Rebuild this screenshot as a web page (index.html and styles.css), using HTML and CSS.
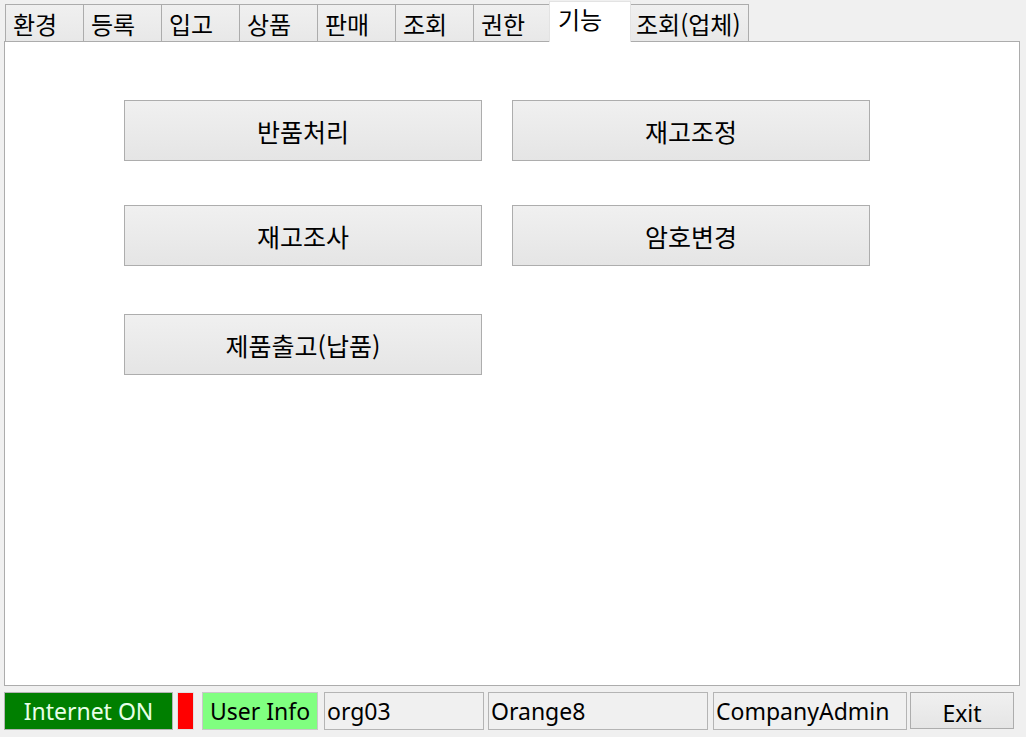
FILE: index.html
```html
<!DOCTYPE html>
<html lang="ko">
<head>
    <meta charset="UTF-8">
    <title>기능</title>
    <link rel="stylesheet" href="styles.css">
</head>
<body>

    <div class="tabs">
        <div class="tab">환경</div>
        <div class="tab">등록</div>
        <div class="tab">입고</div>
        <div class="tab">상품</div>
        <div class="tab">판매</div>
        <div class="tab">조회</div>
        <div class="tab">권한</div>
        <div class="tab active">기능</div>
        <div class="tab wide">조회(업체)</div>
    </div>

    <div class="panel">
        <div class="buttons">
            <button class="btn">반품처리</button>
            <button class="btn">재고조정</button>
            <button class="btn">재고조사</button>
            <button class="btn">암호변경</button>
            <button class="btn last">제품출고(납품)</button>
        </div>
    </div>

    <div class="status">
        <div class="box internet">Internet ON</div>
        <div class="box led"></div>
        <div class="box userinfo">User Info</div>
        <div class="box field org">org03</div>
        <div class="box field name">Orange8</div>
        <div class="box field role">CompanyAdmin</div>
        <button class="exit">Exit</button>
    </div>

</body>
</html>
```

FILE: styles.css
```css
/* General Styles */
body {
    margin: 0;
    padding: 0;
    width: 1026px;
    height: 737px;
    background-color: #f0f0f0;
    font-family: "Noto Sans CJK KR", "Noto Sans", sans-serif;
    color: #000;
    overflow: hidden;
}

/* Tab strip */
.tabs {
    display: flex;
    align-items: flex-end;
    height: 41px;
    padding-left: 5px;
    box-sizing: border-box;
}

.tab {
    width: 79px;
    height: 37px;
    box-sizing: border-box;
    margin-left: -1px;
    padding: 5px 0 0 7px;
    border: 1px solid #acacac;
    border-bottom: none;
    background: linear-gradient(#f0f0f0, #e8e8e8);
    font-size: 24px;
    line-height: 28px;
}

.tab:first-child {
    margin-left: 0;
}

.tab.active {
    position: relative;
    z-index: 1;
    width: 82px;
    height: 41px;
    margin-left: -3px;
    margin-bottom: -1px;
    padding: 3px 0 0 8px;
    background: #fff;
    border-color: #e3e3e3;
}

.tab.wide {
    width: 119px;
    padding-left: 5px;
}

/* Main panel */
.panel {
    width: 1016px;
    height: 645px;
    box-sizing: border-box;
    margin-left: 4px;
    border: 1px solid #acacac;
    background-color: #fff;
    padding: 58px 0 0 119px;
}

.buttons {
    display: grid;
    grid-template-columns: 358px 358px;
    column-gap: 30px;
    row-gap: 44px;
}

.btn {
    height: 61px;
    border: 1px solid #adadad;
    background: linear-gradient(#f0f0f0, #e5e5e5);
    font-family: "Noto Sans CJK KR", sans-serif;
    font-size: 25px;
    color: #000;
    padding: 0;
}

.btn.last {
    margin-top: 4px;
}

/* Status bar */
.status {
    display: flex;
    height: 38px;
    margin-top: 6px;
    padding-left: 4px;
    font-family: "Noto Sans", "Noto Sans CJK KR", sans-serif;
    font-size: 23px;
}

.box {
    box-sizing: border-box;
    border: 1px solid #b4b4b4;
    line-height: 36px;
    white-space: nowrap;
}

.internet {
    width: 169px;
    background-color: #007f00;
    color: #e8ffe8;
    text-align: center;
}

.led {
    width: 17px;
    margin-left: 4px;
    background-color: #ff0000;
    border-color: #e0e0e0;
}

.userinfo {
    width: 116px;
    margin-left: 8px;
    background-color: #80ff80;
    text-align: center;
    border-color: #c8c8c8;
}

.field {
    padding-left: 2px;
}

.org {
    width: 160px;
    margin-left: 6px;
}

.name {
    width: 220px;
    margin-left: 4px;
}

.role {
    width: 194px;
    margin-left: 5px;
}

.exit {
    width: 104px;
    height: 37px;
    margin-left: 3px;
    border: 1px solid #adadad;
    background: linear-gradient(#f0f0f0, #e5e5e5);
    font-family: "Noto Sans", sans-serif;
    font-size: 23px;
    padding: 4px 0 0 0;
    color: #000;
}
```
